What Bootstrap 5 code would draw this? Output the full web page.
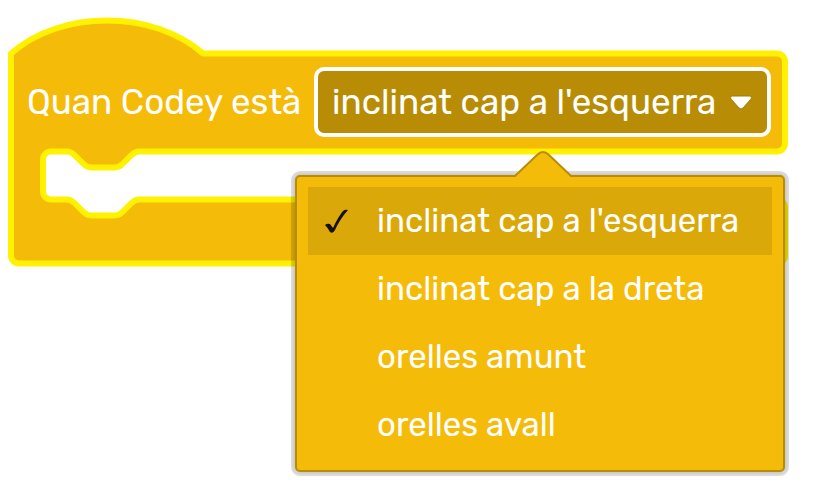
<!DOCTYPE html>
<html lang="ca">
<head>
<meta charset="utf-8">
<meta name="viewport" content="width=device-width, initial-scale=1">
<title>Quan Codey està</title>
<link href="https://cdn.jsdelivr.net/npm/bootstrap@5.3.0/dist/css/bootstrap.min.css" rel="stylesheet">
<style>
  :root { --block: #f5bb09; --block-dark: #b88d05; --glow: #fff200; }
  body { font-family: Rubik, Roboto, "Liberation Sans", sans-serif; color: #fff; background: #fff; }
  .workspace { padding: 17px 8px; }
  .hat-block { min-height: 250px; max-width: 780px; padding: 50px 17px 0 19px; }
  .block-shape { z-index: 0; }
  .block-shape path { fill: var(--block); stroke: var(--glow); stroke-width: 6px; stroke-linejoin: round; }
  .block-row { z-index: 1; font-size: 35px; line-height: 48px; gap: 12px; }
  .field-btn, .field-btn.btn:hover, .field-btn.btn:active { background: var(--block-dark); color: #fff; border: 4px solid #fff; }
  .field-btn { width: 457px; height: 70px; padding: 0 14px; border-radius: 10px; font-size: 35px; line-height: 48px; }
  .options-panel { top: 108px; right: -14px; width: 490px; padding: 10px 11px 11px; border: 2px solid var(--block-dark);
    border-radius: 5px; background: var(--block); box-shadow: 0 0 0 4px rgba(0,0,0,.12), 0 0 4px 1px rgba(0,0,0,.15); }
  .panel-arrow { left: 217px; top: -27px; }
  .option-btn { height: 68px; padding: 0 16px; border: 0; border-radius: 0; color: #fff; font-size: 33px; line-height: 48px; }
  .option-btn:hover, .option-btn[aria-selected="true"] { background: #daa808; color: #fff; }
  .tick-slot { width: 53px; }
</style>
<script src="https://cdn.jsdelivr.net/npm/bootstrap@5.3.0/dist/js/bootstrap.bundle.min.js"></script>
</head>
<body>
<main class="workspace min-vh-100">
  <section class="hat-block position-relative">
    <svg class="block-shape position-absolute top-0 start-0" width="780" height="250" viewBox="8 17 780 250" aria-hidden="true">
      <path d="M11 53.5c50-44 142-44 192 0H777a8 8 0 0 1 8 8V143.500a8 8 0 0 1-8 8H139c-4 0-6 2-8 4l-8 8c-2 2-4 4-8 4H91c-4 0-6-2-8-4l-8-8c-2-2-4-4-8-4H51a8 8 0 0 0-8 8V191.500a8 8 0 0 0 8 8H67c4 0 6 2 8 4l8 8c2 2 4 4 8 4H115c4 0 6-2 8-4l8-8c2-2 4-4 8-4H777a8 8 0 0 1 8 8V255.500a8 8 0 0 1-8 8H19a8 8 0 0 1-8-8Z"/>
    </svg>
    <div class="block-row position-relative d-flex align-items-center justify-content-between">
      <span id="field-label" class="text-nowrap">Quan Codey està</span>
      <div class="position-relative flex-shrink-0">
        <button type="button" class="field-btn btn d-flex align-items-center justify-content-between text-nowrap" aria-haspopup="listbox" aria-expanded="true" aria-labelledby="field-label field-value">
          <span id="field-value">inclinat cap a l'esquerra</span>
          <svg width="24" height="16" viewBox="0 0 24 16" aria-hidden="true"><path fill="#fff" stroke="#a17b04" stroke-width="1" d="M4 2H20c2.500 0 3 2 1.500 3.500L14 14q-2 2-4 0L2.500 5.500C1 4 1.500 2 4 2Z"/></svg>
        </button>
        <div class="options-panel position-absolute">
          <svg class="panel-arrow position-absolute" width="58" height="29" viewBox="0 0 58 29" aria-hidden="true"><path fill="#f5bb09" d="M0 29V28L23 5q6-6 12 0L58 28V29Z"/><path fill="none" stroke="#b88d05" stroke-width="2" d="M0 26H1L23 5q6-6 12 0L57 26H58"/></svg>
          <div role="listbox" aria-labelledby="field-label" class="d-flex flex-column">
            <button type="button" role="option" aria-selected="true" class="option-btn btn d-flex align-items-center text-nowrap">
              <span class="tick-slot d-flex"><svg width="26" height="28" viewBox="0 0 26 28" aria-hidden="true"><path fill="#171200" d="M1 18q2-2 5-1l3 4Q14 10 19 4q2-2 5-1Q16 12 11 23q-2 4-5 2Q4 21 1 18Z"/></svg></span>inclinat cap a l'esquerra
            </button>
            <button type="button" role="option" aria-selected="false" class="option-btn btn d-flex align-items-center text-nowrap"><span class="tick-slot"></span>inclinat cap a la dreta</button>
            <button type="button" role="option" aria-selected="false" class="option-btn btn d-flex align-items-center text-nowrap"><span class="tick-slot"></span>orelles amunt</button>
            <button type="button" role="option" aria-selected="false" class="option-btn btn d-flex align-items-center text-nowrap"><span class="tick-slot"></span>orelles avall</button>
          </div>
        </div>
      </div>
    </div>
  </section>
</main>
</body>
</html>
